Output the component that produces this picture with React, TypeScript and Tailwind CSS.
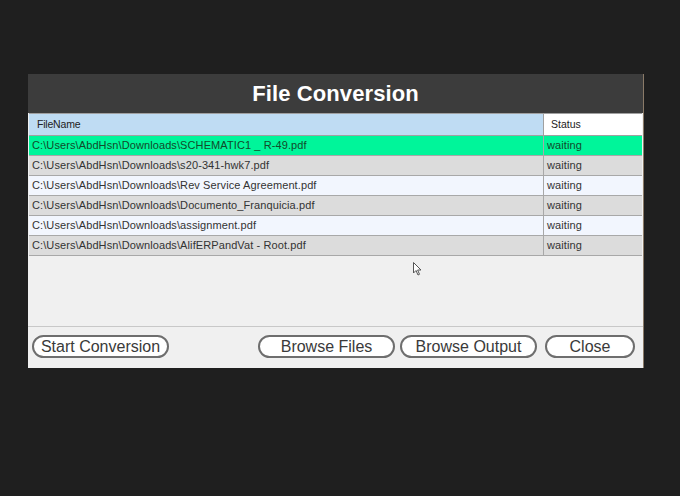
import React from "react";

const files = [
  "C:\\Users\\AbdHsn\\Downloads\\SCHEMATIC1 _ R-49.pdf",
  "C:\\Users\\AbdHsn\\Downloads\\s20-341-hwk7.pdf",
  "C:\\Users\\AbdHsn\\Downloads\\Rev Service Agreement.pdf",
  "C:\\Users\\AbdHsn\\Downloads\\Documento_Franquicia.pdf",
  "C:\\Users\\AbdHsn\\Downloads\\assignment.pdf",
  "C:\\Users\\AbdHsn\\Downloads\\AlifERPandVat - Root.pdf",
];

function Btn({ label, w }: { label: string; w: string }) {
  return (
    <button
      className={`${w} h-[23px] rounded-full border-2 border-[#6e6e6e] bg-white text-[16px] leading-none text-[#3a3a3a] flex items-center justify-center`}
    >
      {label}
    </button>
  );
}

export default function App() {
  return (
    <div
      className="w-[680px] h-[496px] bg-[#1f1f1f] pt-[74px] pl-[28px] relative"
      style={{ fontFamily: '"Liberation Sans", Arial, sans-serif' }}
    >
      <div className="w-[616px] h-[294px] bg-[#f0f0f0] border-r border-[#8a7a68] flex flex-col">
        {/* TITLE */}
        <div className="h-[39px] bg-[#3c3c3c] flex items-center justify-center">
          <span className="text-white font-bold text-[22px] tracking-[0.1px]">File Conversion</span>
        </div>

        {/* GRID */}
        <div className="h-[213px] mx-[1px] border-t border-[#a0a0a0] flex flex-col">
          <div className="h-[22px] flex border-b border-[#a0a0a0] text-[10.5px] text-[#222]">
            <div className="w-[515px] bg-[#bfdcf3] pl-[8px] flex items-center border-r border-[#a0a0a0] tracking-[-0.2px]">
              FileName
            </div>
            <div className="flex-1 bg-white pl-[7px] flex items-center">Status</div>
          </div>
          {files.map((f, i) => {
            const bg = i === 0 ? "bg-[#00f59a]" : i % 2 === 1 ? "bg-[#dcdcdc]" : "bg-[#f2f6fe]";
            const color = i === 0 ? "text-[#124a2a]" : "text-[#333]";
            return (
              <div key={i} className={`h-[20px] flex border-b border-[#a8a8a8] text-[11px] tracking-[0.1px] ${bg} ${color}`}>
                <div className="w-[515px] pl-[3px] flex items-center border-r border-[#a8a8a8] whitespace-pre">
                  {f}
                </div>
                <div className="flex-1 pl-[3px] flex items-center">waiting</div>
              </div>
            );
          })}
        </div>

        {/* BOTTOM */}
        <div className="flex-1 border-t border-[#c8c8c8] flex items-start pt-[8px] pl-[4px]">
          <Btn label="Start Conversion" w="w-[137px]" />
          <div className="w-[89px]" />
          <Btn label="Browse Files" w="w-[137px]" />
          <div className="w-[5px]" />
          <Btn label="Browse Output" w="w-[137px]" />
          <div className="w-[8px]" />
          <Btn label="Close" w="w-[90px]" />
        </div>
      </div>

      {/* cursor */}
      <svg className="absolute left-[413px] top-[262px]" width="10" height="15" viewBox="0 0 10 15">
        <path d="M0.5 0.5 L0.5 11 L3 8.5 L5 13 L6.5 12.3 L4.6 8 L8 8 Z" fill="#fff" stroke="#555" strokeWidth="1" />
      </svg>
    </div>
  );
}
